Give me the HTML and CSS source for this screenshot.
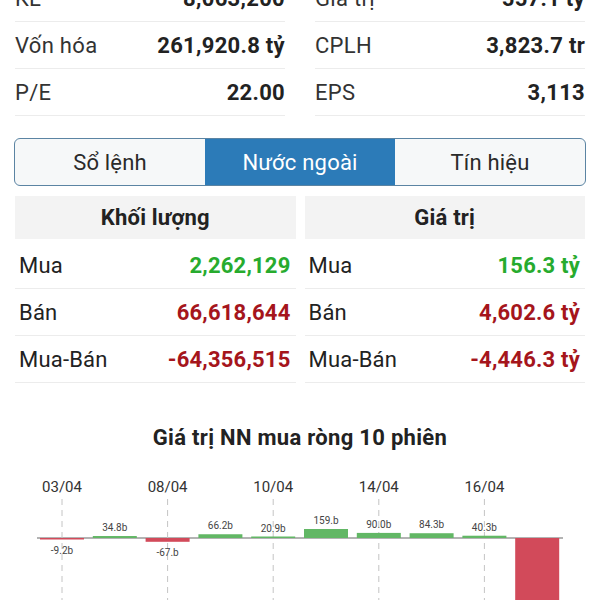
FILE: index.html
```html
<!DOCTYPE html>
<html lang="vi">
<head>
  <meta charset="UTF-8" />
  <meta name="viewport" content="width=device-width, initial-scale=1" />
  <title>Nước ngoài</title>
  <link rel="stylesheet" href="styles.css">
</head>
<body>
  <div class="page">
    <section class="stats">
      <div class="stat-col">
        <div class="stat-row"><span>KL</span><b>8,063,200</b></div>
        <div class="stat-row"><span>Vốn hóa</span><b>261,920.8 tỷ</b></div>
        <div class="stat-row"><span>P/E</span><b>22.00</b></div>
      </div>
      <div class="stat-col">
        <div class="stat-row"><span>Giá trị</span><b>557.1 tỷ</b></div>
        <div class="stat-row"><span>CPLH</span><b>3,823.7 tr</b></div>
        <div class="stat-row"><span>EPS</span><b>3,113</b></div>
      </div>
    </section>

    <nav class="tabs">
      <div class="tab">Sổ lệnh</div>
      <div class="tab active">Nước ngoài</div>
      <div class="tab">Tín hiệu</div>
    </nav>

    <section class="foreign">
      <div class="panel">
        <div class="panel-head">Khối lượng</div>
        <div class="panel-row"><span>Mua</span><b class="up">2,262,129</b></div>
        <div class="panel-row"><span>Bán</span><b class="down">66,618,644</b></div>
        <div class="panel-row"><span>Mua-Bán</span><b class="down">-64,356,515</b></div>
      </div>
      <div class="panel">
        <div class="panel-head">Giá trị</div>
        <div class="panel-row"><span>Mua</span><b class="up">156.3 tỷ</b></div>
        <div class="panel-row"><span>Bán</span><b class="down">4,602.6 tỷ</b></div>
        <div class="panel-row"><span>Mua-Bán</span><b class="down">-4,446.3 tỷ</b></div>
      </div>
    </section>

    <section class="chart">
      <h3>Giá trị NN mua ròng 10 phiên</h3>
      <svg id="netChart" class="chart-svg" width="600" height="170" viewBox="0 0 600 170"></svg>
    </section>
  </div>

  <script>
    const sessions = [
      { date: "03/04", value: -9.2, label: "-9.2b" },
      { date: "07/04", value: 34.8, label: "34.8b" },
      { date: "08/04", value: -67, label: "-67.b" },
      { date: "09/04", value: 66.2, label: "66.2b" },
      { date: "10/04", value: 20.9, label: "20.9b" },
      { date: "11/04", value: 159, label: "159.b" },
      { date: "14/04", value: 90.0, label: "90.0b" },
      { date: "15/04", value: 84.3, label: "84.3b" },
      { date: "16/04", value: 40.3, label: "40.3b" },
      { date: "17/04", value: -4446.3, label: "-4446.3b" }
    ];
    const svg = document.getElementById("netChart");
    const NS = "http://www.w3.org/2000/svg";
    const base = 79, first = 62, step = 52.8, barW = 44, scale = 9 / 159;

    function el(name, attrs, text) {
      const node = document.createElementNS(NS, name);
      for (const k in attrs) node.setAttribute(k, attrs[k]);
      if (text) node.textContent = text;
      svg.appendChild(node);
      return node;
    }

    // ligne de base
    el("line", { x1: 37, x2: 563, y1: base, y2: base, class: "axis" });

    sessions.forEach((s, i) => {
      const cx = first + i * step;
      if (i % 2 === 0) {
        el("line", { x1: cx, x2: cx, y1: 40, y2: 170, class: "grid" });
        el("text", { x: cx, y: 33, class: "date" }, s.date);
      }
      const h = Math.max(Math.abs(s.value) * scale, 1.5);
      const up = s.value >= 0;
      el("rect", {
        x: cx - barW / 2, width: barW,
        y: up ? base - h : base, height: h,
        class: up ? "bar-up" : "bar-down"
      });
      el("text", { x: cx, y: up ? base - h - 5 : base + h + 14, class: "val" }, s.label);
    });
  </script>
</body>
</html>
```

FILE: styles.css
```css
html, body {
  margin: 0;
  height: 600px;
  overflow: hidden;
  background: #fff;
}
body {
  font-family: Roboto, "Noto Sans", sans-serif;
  color: #222;
}
.page {
  margin-top: -25px;
}

/* chiffres clés */
.stats {
  display: grid;
  grid-template-columns: 1fr 1fr;
  column-gap: 30px;
  padding: 0 15px;
}
.stat-row {
  height: 46px;
  display: flex;
  justify-content: space-between;
  align-items: center;
  border-bottom: 1px solid #ececec;
  font-size: 22px;
  letter-spacing: 0.3px;
}
.stat-row span {
  color: #333;
}
.stat-row b {
  font-weight: 700;
  color: #222;
}

/* onglets */
.tabs {
  display: flex;
  margin: 22px 14px 0;
  height: 46px;
  border: 1.5px solid #5b84a3;
  border-radius: 6px;
  overflow: hidden;
  background: #f6f8f9;
}
.tab {
  flex: 1;
  display: flex;
  align-items: center;
  justify-content: center;
  font-size: 22px;
  letter-spacing: 0.2px;
  color: #2a2a2a;
}
.tab.active {
  background: #2c7bb8;
  color: #fff;
}

/* tableaux */
.foreign {
  display: grid;
  grid-template-columns: 1fr 1fr;
  column-gap: 9px;
  padding: 0 15px;
  margin-top: 10px;
}
.panel-head {
  height: 43px;
  background: #f3f3f3;
  display: flex;
  align-items: center;
  justify-content: center;
  font-size: 22px;
  letter-spacing: 0.2px;
  font-weight: 700;
  margin-bottom: 3px;
}
.panel-row {
  height: 46px;
  display: flex;
  justify-content: space-between;
  align-items: center;
  padding: 0 5px 0 4px;
  border-bottom: 1px solid #ececec;
  font-size: 22px;
  letter-spacing: 0.2px;
}
.panel-row b {
  font-weight: 700;
}
.up {
  color: #27ab2e;
}
.down {
  color: #a5151c;
}

/* graphique */
.chart {
  margin-top: 42px;
}
.chart h3 {
  margin: 0;
  text-align: center;
  font-size: 22px;
  letter-spacing: 0.3px;
  line-height: 26px;
  font-weight: 700;
  color: #222;
}
.chart-svg {
  display: block;
  margin-top: 8px;
}
.axis {
  stroke: #9a9a9a;
  stroke-width: 1.5;
}
.grid {
  stroke: #c4c4c4;
  stroke-width: 1;
  stroke-dasharray: 6 5;
}
.date {
  font-size: 15px;
  fill: #333;
  text-anchor: middle;
}
.val {
  font-size: 10px;
  fill: #444;
  text-anchor: middle;
}
.bar-up {
  fill: #62b765;
}
.bar-down {
  fill: #d24a5a;
}
```
